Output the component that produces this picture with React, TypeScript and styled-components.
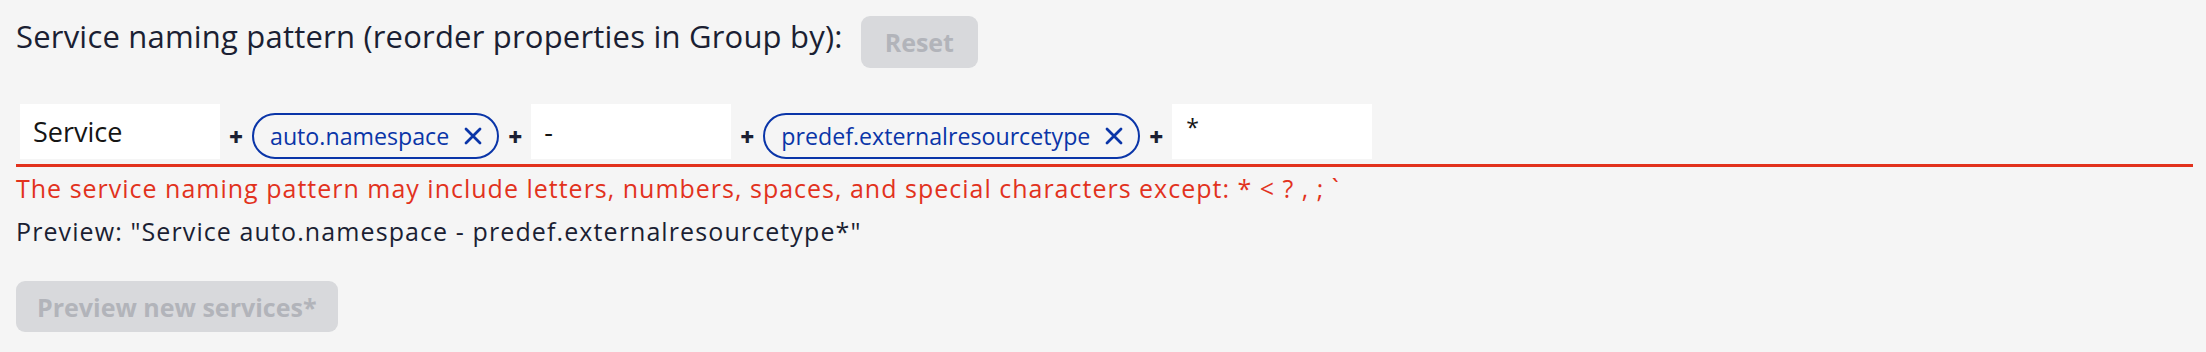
import React from 'react';
import styled, { createGlobalStyle } from 'styled-components';

const GlobalStyle = createGlobalStyle`
  html, body {
    margin: 0;
    padding: 0;
    background: #f5f5f5;
  }
  body {
    font-family: "Open Sans", Lato, sans-serif;
  }
`;

const Page = styled.div`
  padding: 16px 13px 20px 16px;
  background: #f5f5f5;
  color: #1b1f33;
`;

const Header = styled.div`
  display: flex;
  align-items: flex-start;
  gap: 18px;
`;

const Title = styled.div`
  font-size: 31px;
  letter-spacing: 0.2px;
  line-height: 40px;
  color: #1b1f33;
`;

const GrayButton = styled.button<{ $wide?: boolean }>`
  height: ${(p) => (p.$wide ? '51px' : '52px')};
  padding: 0 ${(p) => (p.$wide ? '21px' : '24px')};
  border: none;
  border-radius: 9px;
  background: #d8d9dc;
  color: #b2b4ba;
  font-family: "Open Sans", Lato, sans-serif;
  font-size: 25px;
  font-weight: 700;
  cursor: not-allowed;
`;

const PatternRow = styled.div`
  margin-top: 36px;
  display: flex;
  align-items: flex-end;
  padding: 0 0 5px 4px;
  border-bottom: 3px solid #e2321d;
`;

const TextPart = styled.div`
  width: 200px;
  height: 55px;
  box-sizing: border-box;
  padding: 0 13px;
  background: #ffffff;
  display: flex;
  align-items: center;
  font-size: 27px;
  color: #151515;
`;

const Star = styled.span`
  font-size: 23px;
  line-height: 1;
  margin-top: -9px;
  margin-left: 1px;
`;

const Plus = styled.div`
  width: 32px;
  height: 46px;
  display: flex;
  align-items: center;
  justify-content: center;
  font-size: 24px;
  font-weight: 800;
  color: #1b1f33;
`;

const Chip = styled.div`
  height: 46px;
  box-sizing: border-box;
  display: flex;
  align-items: center;
  gap: 15px;
  padding: 0 15px 0 16px;
  border: 2px solid #0a35a8;
  border-radius: 23px;
  color: #0a35a8;
  font-size: 23.2px;
`;

const RemoveIcon = styled.svg`
  width: 18px;
  height: 18px;
  flex-shrink: 0;
`;

const ErrorText = styled.div`
  margin-top: 6px;
  font-size: 25px;
  letter-spacing: 1px;
  line-height: 1.2;
  color: #e2321d;
`;

const PreviewText = styled.div`
  margin-top: 13px;
  font-size: 25px;
  letter-spacing: 1.1px;
  line-height: 1.2;
  color: #1b1f33;
`;

const Actions = styled.div`
  margin-top: 35px;
`;

const Remove = () => (
  <RemoveIcon viewBox="0 0 18 18" fill="none">
    <path d="M2 2L16 16M16 2L2 16" stroke="#0a35a8" strokeWidth="2.8" strokeLinecap="round" />
  </RemoveIcon>
);

type Part = { kind: 'text' | 'prop'; value: string };

const parts: Part[] = [
  { kind: 'text', value: 'Service' },
  { kind: 'prop', value: 'auto.namespace' },
  { kind: 'text', value: '-' },
  { kind: 'prop', value: 'predef.externalresourcetype' },
  { kind: 'text', value: '*' },
];

export default function App() {
  return (
    <>
      <GlobalStyle />
      <Page>
        <Header>
          <Title>Service naming pattern (reorder properties in Group by):</Title>
          <GrayButton disabled>Reset</GrayButton>
        </Header>

        <PatternRow>
          {parts.map((part, index) => (
            <React.Fragment key={index}>
              {index > 0 && <Plus>+</Plus>}
              {part.kind === 'text' ? (
                <TextPart>{part.value === '*' ? <Star>*</Star> : part.value}</TextPart>
              ) : (
                <Chip>
                  <span>{part.value}</span>
                  <Remove />
                </Chip>
              )}
            </React.Fragment>
          ))}
        </PatternRow>

        <ErrorText>
          The service naming pattern may include letters, numbers, spaces, and special characters except: * &lt; ? , ; `
        </ErrorText>
        <PreviewText>Preview: "Service auto.namespace - predef.externalresourcetype*"</PreviewText>

        <Actions>
          <GrayButton $wide disabled>
            Preview new services*
          </GrayButton>
        </Actions>
      </Page>
    </>
  );
}
